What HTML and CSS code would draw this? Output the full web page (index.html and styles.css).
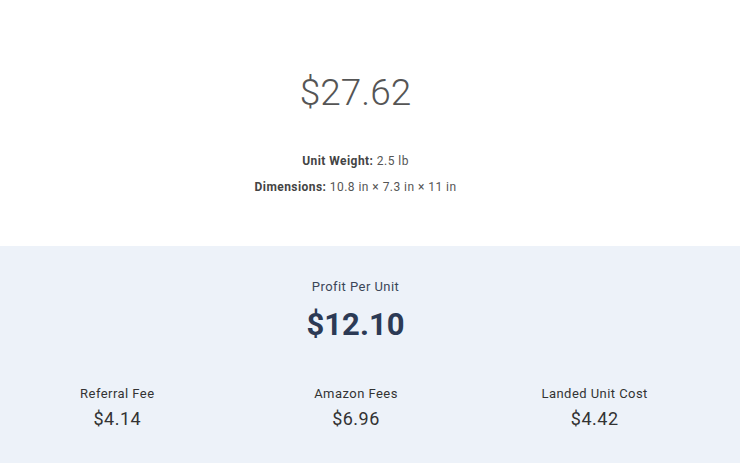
FILE: index.html
```html
<!DOCTYPE html>
<html>
<head>
<meta charset="utf-8">
<link rel="stylesheet" href="styles.css">
</head>
<body>
<section class="top">
  <div class="wrap">
    <div class="price">$27.62</div>
    <div class="specs">
      <div class="spec"><b>Unit Weight:</b> 2.5 lb</div>
      <div class="spec"><b>Dimensions:</b> 10.8 in × 7.3 in × 11 in</div>
    </div>
  </div>
</section>
<section class="panel">
  <div class="wrap">
    <div class="profit-label">Profit Per Unit</div>
    <div class="profit">$12.10</div>
    <div class="cols">
      <div class="col"><div class="col-label">Referral Fee</div><div class="col-value">$4.14</div></div>
      <div class="col"><div class="col-label">Amazon Fees</div><div class="col-value">$6.96</div></div>
      <div class="col"><div class="col-label">Landed Unit Cost</div><div class="col-value">$4.42</div></div>
    </div>
  </div>
</section>
</body>
</html>
```
FILE: styles.css
```css
* { box-sizing: border-box; }
html, body { margin: 0; padding: 0; }
body {
  font-family: Roboto, "Liberation Sans", sans-serif;
  background: #fff;
  color: #333;
  width: 740px;
  height: 463px;
  overflow: hidden;
}
.wrap {
  width: 711px;
  text-align: center;
}
.top {
  height: 246px;
  padding-top: 70px;
}
.price {
  font-size: 37px;
  font-weight: 300;
  line-height: 46px;
  color: #555;
}
.specs {
  margin-top: 32px;
}
.spec {
  font-size: 12px;
  line-height: 26px;
  color: #555;
  letter-spacing: 0.45px;
}
.spec b {
  font-weight: 700;
  color: #444;
}
.panel {
  background: #edf2f9;
  height: 217px;
  padding-top: 32px;
}
.profit-label {
  font-size: 13px;
  line-height: 18px;
  color: #3b4658;
  letter-spacing: 0.45px;
}
.profit {
  font-size: 31px;
  font-weight: 700;
  line-height: 40px;
  margin-top: 9px;
  color: #2c3a55;
}
.cols {
  display: grid;
  grid-template-columns: 1fr 1fr 1fr;
  width: 716px;
  margin-top: 40px;
  margin-left: -2px;
}
.col-label {
  font-size: 13px;
  line-height: 18px;
  color: #333;
  letter-spacing: 0.45px;
}
.col-value {
  font-size: 18px;
  line-height: 24px;
  margin-top: 4px;
  color: #333;
  letter-spacing: 0.5px;
}
```
